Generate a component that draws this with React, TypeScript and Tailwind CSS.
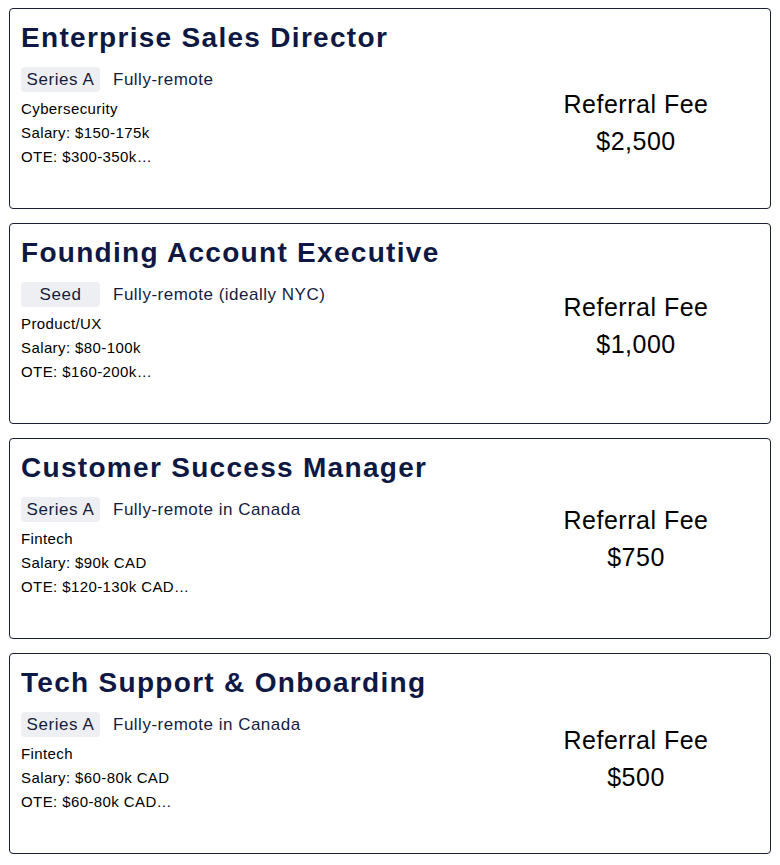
import React from 'react';

interface Job {
  title: string;
  stage: string;
  location: string;
  industry: string;
  salary: string;
  ote: string;
  fee: string;
  feeOffset: string;
}

const jobs: Job[] = [
  {
    title: 'Enterprise Sales Director',
    stage: 'Series A',
    location: 'Fully-remote',
    industry: 'Cybersecurity',
    salary: 'Salary: $150-175k',
    ote: 'OTE: $300-350k…',
    fee: '$2,500',
    feeOffset: 'mt-[77px]',
  },
  {
    title: 'Founding Account Executive',
    stage: 'Seed',
    location: 'Fully-remote (ideally NYC)',
    industry: 'Product/UX',
    salary: 'Salary: $80-100k',
    ote: 'OTE: $160-200k…',
    fee: '$1,000',
    feeOffset: 'mt-[65px]',
  },
  {
    title: 'Customer Success Manager',
    stage: 'Series A',
    location: 'Fully-remote in Canada',
    industry: 'Fintech',
    salary: 'Salary: $90k CAD',
    ote: 'OTE: $120-130k CAD…',
    fee: '$750',
    feeOffset: 'mt-[63px]',
  },
  {
    title: 'Tech Support & Onboarding',
    stage: 'Series A',
    location: 'Fully-remote in Canada',
    industry: 'Fintech',
    salary: 'Salary: $60-80k CAD',
    ote: 'OTE: $60-80k CAD…',
    fee: '$500',
    feeOffset: 'mt-[68px]',
  },
];

function JobCard({ job }: { job: Job }) {
  return (
    <div className="h-[201px] flex border border-[#1b2033] rounded-[4px] bg-white">
      {/* Left: role info */}
      <div className="flex-1 pl-[11px] pt-[10px]">
        <h2 className="text-[28px] leading-[38px] font-bold tracking-[1.3px] text-[#0e1842]">{job.title}</h2>
        <div className="flex items-center gap-[13px] mt-[10px]">
          <span className="min-w-[79px] h-[25px] px-[5px] flex items-center justify-center bg-[#eeeff2] rounded-[4px] text-[17px] tracking-[0.6px] text-[#161c3d]">
            {job.stage}
          </span>
          <span className="text-[17px] tracking-[0.5px] text-[#161c3d]">{job.location}</span>
        </div>
        <div className="mt-[4px] text-[15px] leading-[24px] tracking-[0.4px] text-black">
          <p>{job.industry}</p>
          <p>{job.salary}</p>
          <p>{job.ote}</p>
        </div>
      </div>

      {/* Right: referral fee */}
      <div className={`w-[268px] text-center text-[25px] leading-[37px] tracking-[0.5px] text-black ${job.feeOffset}`}>
        <p>Referral Fee</p>
        <p>{job.fee}</p>
      </div>
    </div>
  );
}

export default function App() {
  return (
    <div className="min-h-screen bg-white px-[9px] pt-[8px] pb-[10px] flex flex-col gap-[14px] font-['Liberation_Sans',Arial,sans-serif]">
      {jobs.map((job) => (
        <JobCard key={job.title} job={job} />
      ))}
    </div>
  );
}
